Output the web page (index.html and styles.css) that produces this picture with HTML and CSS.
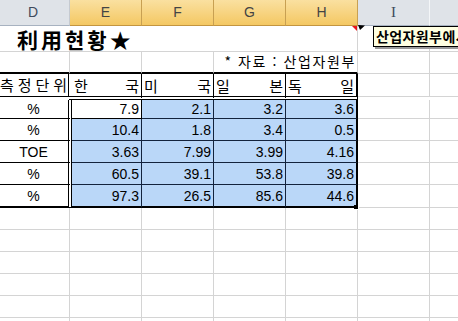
FILE: index.html
```html
<!DOCTYPE html>
<html lang="ko">
<head>
<meta charset="utf-8">
<link rel="stylesheet" href="styles.css">
</head>
<body>
<div class="page">
  <div class="sheet">
    <div class="colhead">
      <div class="ch ch-d">D</div>
      <div class="ch on">E</div>
      <div class="ch on">F</div>
      <div class="ch on">G</div>
      <div class="ch on">H</div>
      <div class="ch ch-i">I</div>
      <div class="ch"></div>
    </div>
    <div class="grid">
      <!-- row 1 -->
      <div class="c title">利用현황★</div>
      <div class="c"></div>
      <div class="c"></div>
      <!-- row 2 -->
      <div class="c dn top">&nbsp;</div>
      <div class="c en top"></div>
      <div class="c top"></div>
      <div class="c top src">* 자료 : 산업자원부</div>
      <div class="c"></div>
      <div class="c"></div>
      <!-- row 3 -->
      <div class="c hd-d"><span>측</span><span>정</span><span>단</span><span>위</span></div>
      <div class="c hd hd-e"><span>한</span><span>국</span></div>
      <div class="c hd"><span>미</span><span>국</span></div>
      <div class="c hd"><span>일</span><span>본</span></div>
      <div class="c hd last"><span>독</span><span>일</span></div>
      <div class="c short"></div>
      <div class="c short"></div>
      <!-- row 4 -->
      <div class="c unit">%</div>
      <div class="c num act">7.9</div>
      <div class="c num bl">2.1</div>
      <div class="c num bl">3.2</div>
      <div class="c num bl last">3.6</div>
      <div class="c"></div>
      <div class="c"></div>
      <!-- row 5 -->
      <div class="c unit">%</div>
      <div class="c num bl">10.4</div>
      <div class="c num bl">1.8</div>
      <div class="c num bl">3.4</div>
      <div class="c num bl last">0.5</div>
      <div class="c"></div>
      <div class="c"></div>
      <!-- row 6 -->
      <div class="c unit">TOE</div>
      <div class="c num bl">3.63</div>
      <div class="c num bl">7.99</div>
      <div class="c num bl">3.99</div>
      <div class="c num bl last">4.16</div>
      <div class="c"></div>
      <div class="c"></div>
      <!-- row 7 -->
      <div class="c unit">%</div>
      <div class="c num bl">60.5</div>
      <div class="c num bl">39.1</div>
      <div class="c num bl">53.8</div>
      <div class="c num bl last">39.8</div>
      <div class="c"></div>
      <div class="c"></div>
      <!-- row 8 -->
      <div class="c unit end">%</div>
      <div class="c num bl end">97.3</div>
      <div class="c num bl end">26.5</div>
      <div class="c num bl end">85.6</div>
      <div class="c num bl last end">44.6</div>
      <div class="c"></div>
      <div class="c"></div>
      <!-- empty rows -->
      <div class="c dn"></div><div class="c en"></div><div class="c"></div><div class="c"></div><div class="c"></div><div class="c"></div><div class="c"></div>
      <div class="c dn"></div><div class="c en"></div><div class="c"></div><div class="c"></div><div class="c"></div><div class="c"></div><div class="c"></div>
      <div class="c dn"></div><div class="c en"></div><div class="c"></div><div class="c"></div><div class="c"></div><div class="c"></div><div class="c"></div>
      <div class="c dn"></div><div class="c en"></div><div class="c"></div><div class="c"></div><div class="c"></div><div class="c"></div><div class="c"></div>
      <div class="c dn"></div><div class="c en"></div><div class="c"></div><div class="c"></div><div class="c"></div><div class="c"></div><div class="c"></div>
      <div class="c dn"></div><div class="c en"></div><div class="c"></div><div class="c"></div><div class="c"></div><div class="c"></div><div class="c"></div>
    </div>
  </div>

  <svg class="marks" width="20" height="10" viewBox="350 24 20 10" aria-hidden="true">
    <polygon points="352,26 357,26 357,31" fill="#e8141b"/>
    <polygon points="358,25 365,25.5 360,30" fill="#000"/>
  </svg>
  <div class="fill-handle"></div>
  <div class="comment">산업자원부에서</div>
</div>
</body>
</html>
```

FILE: styles.css
```css
html, body {
  margin: 0;
  padding: 0;
}

body {
  background: #fff;
  font-family: "Liberation Sans", "Noto Sans CJK KR", sans-serif;
  font-size: 14px;
  color: #000;
}

.page {
  position: relative;
  width: 458px;
  height: 321px;
  overflow: hidden;
}

.sheet {
  margin-left: -3px;
  width: 520px;
}

/* column header */
.colhead {
  display: flex;
  height: 26px;
}

.ch {
  box-sizing: border-box;
  flex: none;
  width: 72px;
  height: 26px;
  background: #dfe3e8;
  border-right: 1px solid #c5cad1;
  border-bottom: 1px solid #a7b2c0;
  display: flex;
  align-items: center;
  justify-content: center;
  color: #3e4a5c;
  font-size: 14px;
  padding-bottom: 1px;
}

.ch-d {
  width: 73px;
}

.ch-i {
  border-right-color: #f4f6f8;
  font-family: "Liberation Serif", serif;
  font-size: 15px;
}

.ch.on {
  background: linear-gradient(#fae0a0, #f4c863);
  border-right-color: #c8a052;
  border-bottom-color: #c39540;
  color: #444;
}

/* sheet grid */
.grid {
  display: grid;
  grid-template-columns: 75px 70px 72px 72px 72px 72px 72px;
  grid-template-rows: 26px 22px 26px 19px 22px 22px 22px 23px repeat(6, 22px);
}

.c {
  box-sizing: border-box;
  border-right: 1px solid #d4d4d4;
  border-bottom: 1px solid #d4d4d4;
  min-width: 0;
}

.title {
  grid-column: span 5;
  font-family: "Noto Sans CJK KR", sans-serif;
  font-weight: bold;
  font-size: 21px;
  letter-spacing: 3px;
  line-height: 24px;
  padding-left: 20px;
  padding-top: 1px;
  white-space: nowrap;
}

.dn {
  justify-self: start;
  width: 73px;
}

.en {
  margin-left: -2px;
}

.top {
  border-bottom: 2px solid #000;
}

.src {
  grid-column: span 2;
  font-family: "Noto Sans CJK KR", sans-serif;
  font-size: 14px;
  letter-spacing: 1.6px;
  text-align: right;
  padding-right: 1px;
  line-height: 19px;
  white-space: nowrap;
}

/* header row of the table */
.hd-d,
.hd {
  display: flex;
  justify-content: space-between;
  align-items: center;
  font-family: "Noto Sans CJK KR", sans-serif;
  font-size: 15px;
}

.hd-d {
  justify-self: start;
  align-self: start;
  width: 72px;
  height: 23px;
  border-right: 1px solid #000;
  border-bottom: 1px solid #000;
  padding: 0 1px 1px 3px;
}

.hd {
  border-right: 1px solid #000;
  border-bottom: 4px double #000;
  padding: 0 2px 0 2px;
}

.hd-e {
  margin-left: -3px;
  padding-left: 5px;
}

.short {
  align-self: start;
  height: 23px;
}

/* data */
.unit {
  display: flex;
  align-items: center;
  justify-content: center;
  border-right: 4px double #000;
  border-bottom: 1px solid #000;
  padding-left: 2px;
}

.num {
  display: flex;
  align-items: center;
  justify-content: flex-end;
  padding-right: 2px;
  border-right: 1px solid #000;
  border-bottom: 1px solid #000;
}

.bl {
  background: #bad7f8;
  border-right-color: #13233d;
  border-bottom-color: #13233d;
}

.act {
  background: #fff;
}

.last {
  border-right: 2px solid #000;
}

.last.bl {
  border-right-color: #000;
}

.end {
  border-bottom: 2px solid #000;
}

.end.bl {
  border-bottom-color: #000;
}

/* overlays */
.marks {
  position: absolute;
  left: 350px;
  top: 24px;
}

.fill-handle {
  position: absolute;
  left: 354px;
  top: 205px;
  width: 4px;
  height: 4px;
  background: #000;
  border: 1px solid #fff;
  border-width: 0 1px 1px 0;
}

.comment {
  position: absolute;
  left: 373px;
  top: 26px;
  width: 110px;
  height: 21px;
  box-sizing: border-box;
  background: #ffffe1;
  border: 1px solid #000;
  box-shadow: 2px 2px 0 #9a9a9a;
  font-family: "Noto Sans CJK KR", sans-serif;
  font-weight: bold;
  font-size: 14px;
  letter-spacing: 0.4px;
  line-height: 18px;
  padding-left: 2px;
  white-space: nowrap;
}
```
